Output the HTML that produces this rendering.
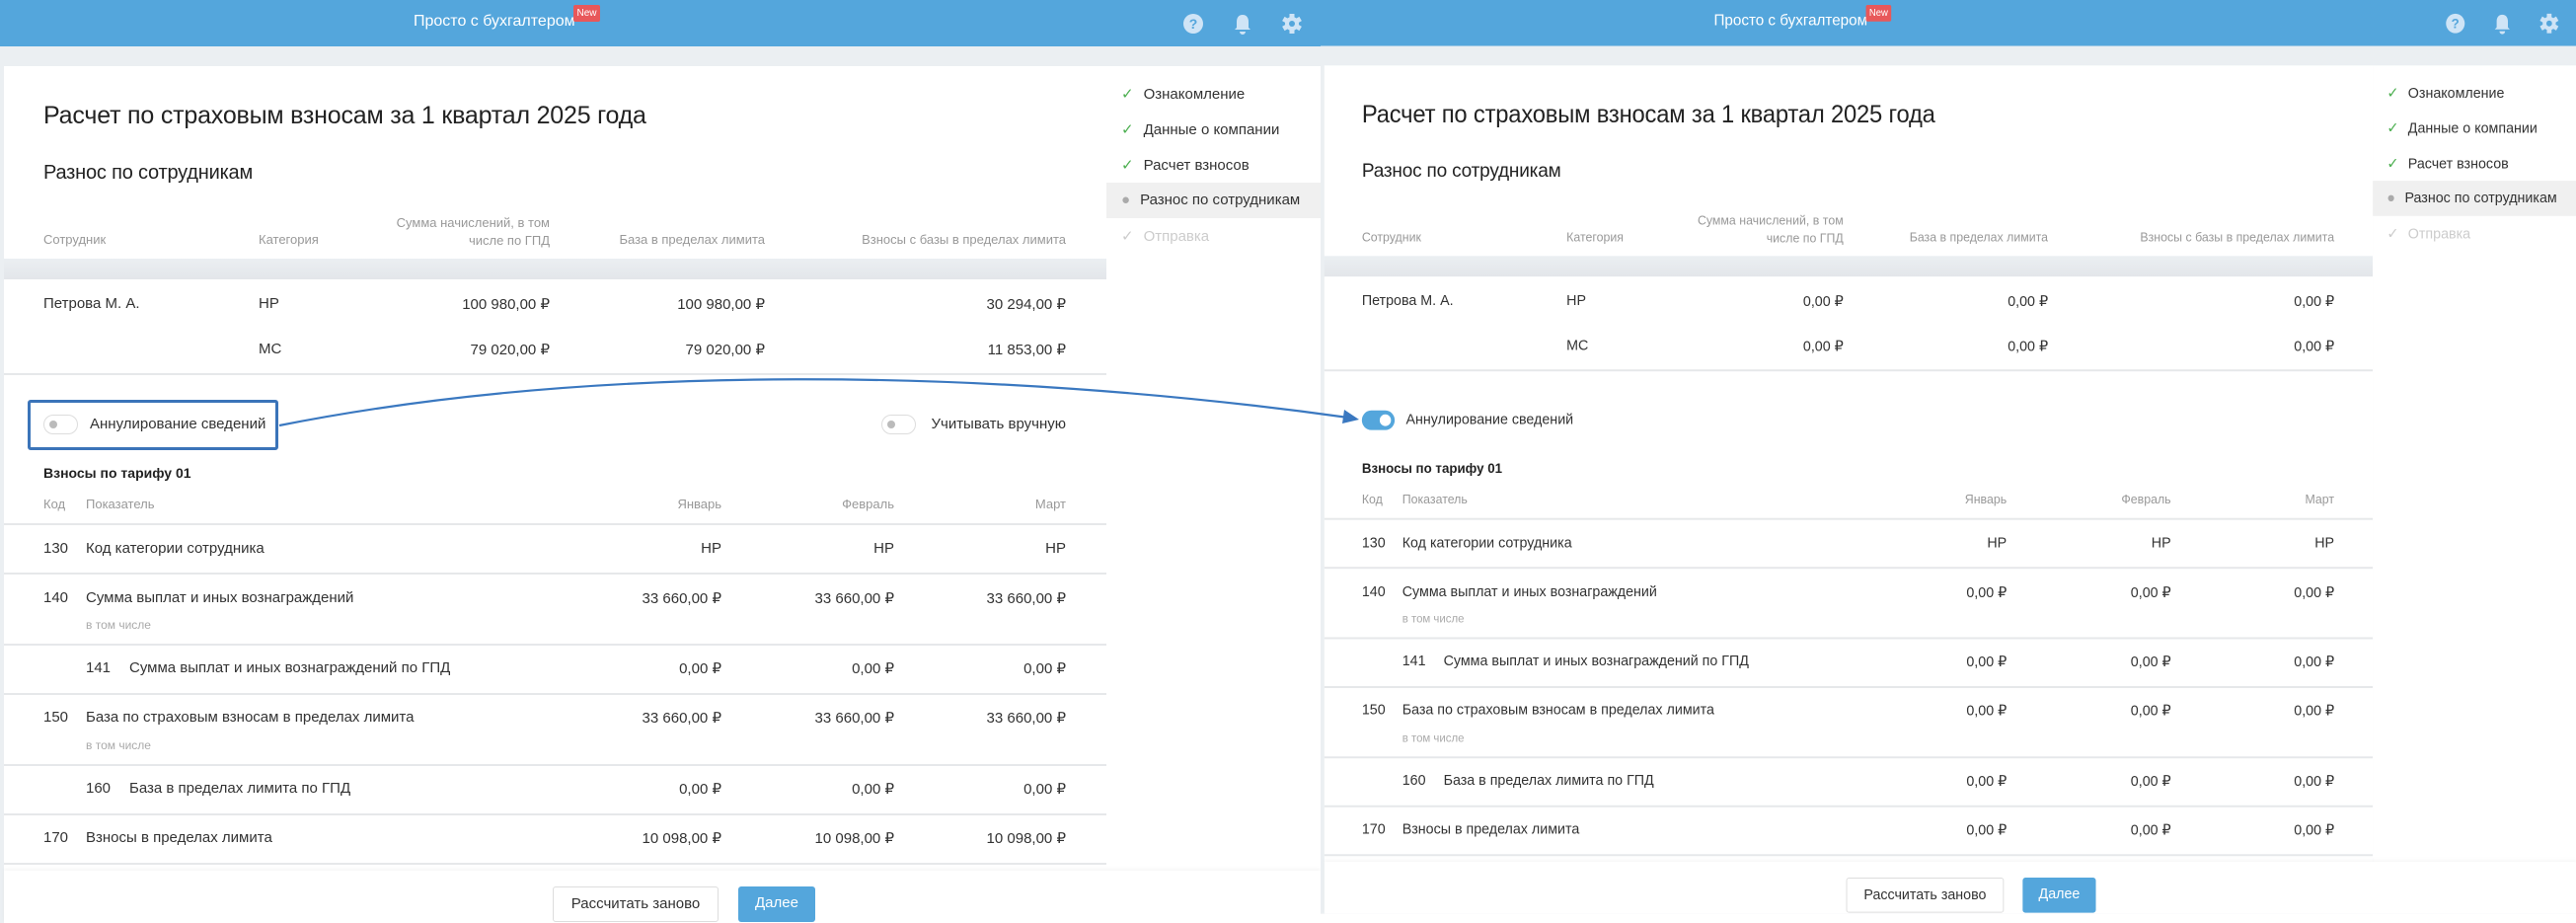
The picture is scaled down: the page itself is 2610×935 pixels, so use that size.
<!DOCTYPE html>
<html><head><meta charset="utf-8"><style>
*{margin:0;padding:0;box-sizing:border-box}
body{width:2610px;height:935px;overflow:hidden;background:#fff;font-family:"Liberation Sans",sans-serif;color:#333;position:relative}
.scr{position:absolute;top:0;width:1338px;height:935px;background:#ebeff2;overflow:hidden}
.scr div,.scr span{position:absolute}
.hdr{left:0;top:0;width:1338px;height:47px;background:#54a6dc}
.ttl{left:419px;top:13px;color:#fff;font-size:16px;white-space:nowrap}
.new{left:581px;top:5px;width:27px;height:17px;background:#e8585a;color:#fff;font-size:10px;border-radius:2px;text-align:center;line-height:17px}
.main{left:4px;top:67px;width:1117px;height:195px;background:#fff}
.band{left:4px;top:262px;width:1117px;height:21px;background:linear-gradient(#ebeff2,#e3e6ea)}
.main2{left:4px;top:283px;width:1117px;height:600px;background:#fff}
.side{left:1121px;top:67px;width:217px;height:816px;background:#fff}
.foot{left:4px;top:882px;width:1334px;height:53px;background:#fff;box-shadow:0 -2px 4px rgba(0,0,0,.04)}
.t{white-space:nowrap}
.h1{left:44px;top:103px;font-size:25px;letter-spacing:-0.2px;color:#222}
.h2{left:44px;top:164px;font-size:20px;letter-spacing:-0.2px;color:#222}
.th{font-size:13px;color:#999}
.r{text-align:right}
.v{font-size:15px;color:#333}
.ln{left:4px;width:1117px;height:2px;background:#e6e8ea}
.tog{width:35px;height:20px;border-radius:10px;background:#fff;border:1px solid #ddd}
.tog i{position:absolute;left:5px;top:5px;width:8px;height:8px;border-radius:50%;background:#bbb}
.sb{left:20px;font-size:15px;color:#333;white-space:nowrap}
.sb b{color:#4caf50;font-weight:normal;margin-right:10px}
.small{font-size:12px;color:#aaa}
.btn{top:898px;height:36px;font-size:15px;line-height:34px;text-align:center;border-radius:3px}
</style></head><body>

<!-- LEFT -->
<div class="scr" style="left:0">
<div class="hdr"></div>
<div class="t ttl">Просто с бухгалтером</div><div class="new">New</div>
<svg style="position:absolute;left:1198px;top:12px" width="124" height="24" viewBox="0 0 124 24"><circle cx="11" cy="12" r="10" fill="#cfe4f6"/><text x="11" y="17" font-size="14" font-weight="bold" text-anchor="middle" fill="#54a6dc" font-family="Liberation Sans">?</text><path d="M61 3c-4 0-6 3-6 7v6l-2 2h16l-2-2v-6c0-4-2-7-6-7z M58 20h6a3 3 0 0 1-6 0z" fill="#cfe4f6"/><g transform="translate(111,12)" fill="#cfe4f6"><circle r="7"/><rect x="-2.5" y="-10" width="5" height="20"/><rect x="-2.5" y="-10" width="5" height="20" transform="rotate(60)"/><rect x="-2.5" y="-10" width="5" height="20" transform="rotate(120)"/><circle r="3" fill="#54a6dc"/></g></svg>
<div class="main"></div><div class="band"></div><div class="main2"></div><div class="side"></div>
<div class="sb" style="left:1136px;top:86px"><b>✓</b>Ознакомление</div>
<div class="sb" style="left:1136px;top:122px"><b>✓</b>Данные о компании</div>
<div class="sb" style="left:1136px;top:158px"><b>✓</b>Расчет взносов</div>
<div style="left:1121px;top:185px;width:217px;height:36px;background:#f0f0f0"></div>
<div class="sb" style="left:1136px;top:194px"><b style="color:#aaa">●</b>Разнос по сотрудникам</div>
<div class="sb" style="left:1136px;top:230px;color:#ccc"><b style="color:#ccc">✓</b>Отправка</div>
<div class="t h1">Расчет по страховым взносам за 1 квартал 2025 года</div>
<div class="t h2">Разнос по сотрудникам</div>
<div class="t th" style="left:44px;top:235px">Сотрудник</div>
<div class="t th" style="left:262px;top:235px">Категория</div>
<div class="t th r" style="left:357px;width:200px;top:217px;line-height:18px">Сумма начислений, в том<br>числе по ГПД</div>
<div class="t th r" style="left:575px;width:200px;top:235px">База в пределах лимита</div>
<div class="t th r" style="left:780px;width:300px;top:235px">Взносы с базы в пределах лимита</div>
<div class="t v" style="left:44px;top:299px">Петрова М. А.</div>
<div class="t v" style="left:262px;top:299px">НР</div>
<div class="t v r" style="left:357px;width:200px;top:299px">100 980,00 ₽</div>
<div class="t v r" style="left:575px;width:200px;top:299px">100 980,00 ₽</div>
<div class="t v r" style="left:880px;width:200px;top:299px">30 294,00 ₽</div>
<div class="t v" style="left:262px;top:345px">МС</div>
<div class="t v r" style="left:357px;width:200px;top:345px">79 020,00 ₽</div>
<div class="t v r" style="left:575px;width:200px;top:345px">79 020,00 ₽</div>
<div class="t v r" style="left:880px;width:200px;top:345px">11 853,00 ₽</div>
<div class="ln" style="top:378px"></div>
<div style="left:28px;top:405px;width:254px;height:51px;border:3px solid #3b74b9;border-radius:3px"></div>
<div class="tog" style="left:44px;top:420px"><i></i></div>
<div class="t v" style="left:91px;top:421px">Аннулирование сведений</div>
<div class="tog" style="left:893px;top:420px"><i></i></div>
<div class="t v r" style="left:880px;width:200px;top:421px">Учитывать вручную</div>
<div class="t" style="left:44px;top:471px;font-size:14px;font-weight:bold;color:#222">Взносы по тарифу 01</div>
<div class="t th" style="left:44px;top:503px">Код</div>
<div class="t th" style="left:87px;top:503px">Показатель</div>
<div class="t th r" style="left:581px;width:150px;top:503px">Январь</div>
<div class="t th r" style="left:756px;width:150px;top:503px">Февраль</div>
<div class="t th r" style="left:930px;width:150px;top:503px">Март</div>
<div class="ln" style="top:530px"></div>
<div class="t v" style="left:44px;top:547px">130</div><div class="t v" style="left:87px;top:547px">Код категории сотрудника</div>
<div class="t v r" style="left:581px;width:150px;top:547px">НР</div><div class="t v r" style="left:756px;width:150px;top:547px">НР</div><div class="t v r" style="left:930px;width:150px;top:547px">НР</div>
<div class="ln" style="top:580px"></div>
<div class="t v" style="left:44px;top:597px">140</div><div class="t v" style="left:87px;top:597px">Сумма выплат и иных вознаграждений</div>
<div class="t small" style="left:87px;top:626px">в том числе</div>
<div class="t v r" style="left:581px;width:150px;top:597px">33 660,00 ₽</div><div class="t v r" style="left:756px;width:150px;top:597px">33 660,00 ₽</div><div class="t v r" style="left:930px;width:150px;top:597px">33 660,00 ₽</div>
<div class="ln" style="top:652px"></div>
<div class="t v" style="left:87px;top:668px">141</div><div class="t v" style="left:131px;top:668px">Сумма выплат и иных вознаграждений по ГПД</div>
<div class="t v r" style="left:581px;width:150px;top:668px">0,00 ₽</div><div class="t v r" style="left:756px;width:150px;top:668px">0,00 ₽</div><div class="t v r" style="left:930px;width:150px;top:668px">0,00 ₽</div>
<div class="ln" style="top:702px"></div>
<div class="t v" style="left:44px;top:718px">150</div><div class="t v" style="left:87px;top:718px">База по страховым взносам в пределах лимита</div>
<div class="t small" style="left:87px;top:748px">в том числе</div>
<div class="t v r" style="left:581px;width:150px;top:718px">33 660,00 ₽</div><div class="t v r" style="left:756px;width:150px;top:718px">33 660,00 ₽</div><div class="t v r" style="left:930px;width:150px;top:718px">33 660,00 ₽</div>
<div class="ln" style="top:774px"></div>
<div class="t v" style="left:87px;top:790px">160</div><div class="t v" style="left:131px;top:790px">База в пределах лимита по ГПД</div>
<div class="t v r" style="left:581px;width:150px;top:790px">0,00 ₽</div><div class="t v r" style="left:756px;width:150px;top:790px">0,00 ₽</div><div class="t v r" style="left:930px;width:150px;top:790px">0,00 ₽</div>
<div class="ln" style="top:824px"></div>
<div class="t v" style="left:44px;top:840px">170</div><div class="t v" style="left:87px;top:840px">Взносы в пределах лимита</div>
<div class="t v r" style="left:581px;width:150px;top:840px">10 098,00 ₽</div><div class="t v r" style="left:756px;width:150px;top:840px">10 098,00 ₽</div><div class="t v r" style="left:930px;width:150px;top:840px">10 098,00 ₽</div>
<div class="ln" style="top:874px"></div>
<div class="foot"></div>
<div class="btn" style="left:560px;width:168px;border:1px solid #ddd;background:#fff;color:#333">Рассчитать заново</div>
<div class="btn" style="left:748px;width:78px;background:#54a6dc;color:#fff">Далее</div>
</div>

<!-- RIGHT -->
<div class="scr" style="left:1338px;transform:scale(0.951,0.99);transform-origin:0 0;width:1338px">
<div class="hdr"></div>
<div class="t ttl">Просто с бухгалтером</div><div class="new">New</div>
<svg style="position:absolute;left:1198px;top:12px" width="124" height="24" viewBox="0 0 124 24"><circle cx="11" cy="12" r="10" fill="#cfe4f6"/><text x="11" y="17" font-size="14" font-weight="bold" text-anchor="middle" fill="#54a6dc" font-family="Liberation Sans">?</text><path d="M61 3c-4 0-6 3-6 7v6l-2 2h16l-2-2v-6c0-4-2-7-6-7z M58 20h6a3 3 0 0 1-6 0z" fill="#cfe4f6"/><g transform="translate(111,12)" fill="#cfe4f6"><circle r="7"/><rect x="-2.5" y="-10" width="5" height="20"/><rect x="-2.5" y="-10" width="5" height="20" transform="rotate(60)"/><rect x="-2.5" y="-10" width="5" height="20" transform="rotate(120)"/><circle r="3" fill="#54a6dc"/></g></svg>
<div class="main"></div><div class="band"></div><div class="main2"></div><div class="side"></div>
<div class="sb" style="left:1136px;top:86px"><b>✓</b>Ознакомление</div>
<div class="sb" style="left:1136px;top:122px"><b>✓</b>Данные о компании</div>
<div class="sb" style="left:1136px;top:158px"><b>✓</b>Расчет взносов</div>
<div style="left:1121px;top:185px;width:217px;height:36px;background:#f0f0f0"></div>
<div class="sb" style="left:1136px;top:194px"><b style="color:#aaa">●</b>Разнос по сотрудникам</div>
<div class="sb" style="left:1136px;top:230px;color:#ccc"><b style="color:#ccc">✓</b>Отправка</div>
<div class="t h1">Расчет по страховым взносам за 1 квартал 2025 года</div>
<div class="t h2">Разнос по сотрудникам</div>
<div class="t th" style="left:44px;top:235px">Сотрудник</div>
<div class="t th" style="left:262px;top:235px">Категория</div>
<div class="t th r" style="left:357px;width:200px;top:217px;line-height:18px">Сумма начислений, в том<br>числе по ГПД</div>
<div class="t th r" style="left:575px;width:200px;top:235px">База в пределах лимита</div>
<div class="t th r" style="left:780px;width:300px;top:235px">Взносы с базы в пределах лимита</div>
<div class="t v" style="left:44px;top:299px">Петрова М. А.</div>
<div class="t v" style="left:262px;top:299px">НР</div>
<div class="t v r" style="left:357px;width:200px;top:299px">0,00 ₽</div>
<div class="t v r" style="left:575px;width:200px;top:299px">0,00 ₽</div>
<div class="t v r" style="left:880px;width:200px;top:299px">0,00 ₽</div>
<div class="t v" style="left:262px;top:345px">МС</div>
<div class="t v r" style="left:357px;width:200px;top:345px">0,00 ₽</div>
<div class="t v r" style="left:575px;width:200px;top:345px">0,00 ₽</div>
<div class="t v r" style="left:880px;width:200px;top:345px">0,00 ₽</div>
<div class="ln" style="top:378px"></div>
<div style="left:44px;top:420px;width:35px;height:20px;border-radius:10px;background:#54a6dc"><i style="position:absolute;right:4px;top:4px;width:12px;height:12px;border-radius:50%;background:#fff"></i></div>
<div class="t v" style="left:91px;top:421px">Аннулирование сведений</div>
<div class="t" style="left:44px;top:471px;font-size:14px;font-weight:bold;color:#222">Взносы по тарифу 01</div>
<div class="t th" style="left:44px;top:503px">Код</div>
<div class="t th" style="left:87px;top:503px">Показатель</div>
<div class="t th r" style="left:581px;width:150px;top:503px">Январь</div>
<div class="t th r" style="left:756px;width:150px;top:503px">Февраль</div>
<div class="t th r" style="left:930px;width:150px;top:503px">Март</div>
<div class="ln" style="top:530px"></div>
<div class="t v" style="left:44px;top:547px">130</div><div class="t v" style="left:87px;top:547px">Код категории сотрудника</div>
<div class="t v r" style="left:581px;width:150px;top:547px">НР</div><div class="t v r" style="left:756px;width:150px;top:547px">НР</div><div class="t v r" style="left:930px;width:150px;top:547px">НР</div>
<div class="ln" style="top:580px"></div>
<div class="t v" style="left:44px;top:597px">140</div><div class="t v" style="left:87px;top:597px">Сумма выплат и иных вознаграждений</div>
<div class="t small" style="left:87px;top:626px">в том числе</div>
<div class="t v r" style="left:581px;width:150px;top:597px">0,00 ₽</div><div class="t v r" style="left:756px;width:150px;top:597px">0,00 ₽</div><div class="t v r" style="left:930px;width:150px;top:597px">0,00 ₽</div>
<div class="ln" style="top:652px"></div>
<div class="t v" style="left:87px;top:668px">141</div><div class="t v" style="left:131px;top:668px">Сумма выплат и иных вознаграждений по ГПД</div>
<div class="t v r" style="left:581px;width:150px;top:668px">0,00 ₽</div><div class="t v r" style="left:756px;width:150px;top:668px">0,00 ₽</div><div class="t v r" style="left:930px;width:150px;top:668px">0,00 ₽</div>
<div class="ln" style="top:702px"></div>
<div class="t v" style="left:44px;top:718px">150</div><div class="t v" style="left:87px;top:718px">База по страховым взносам в пределах лимита</div>
<div class="t small" style="left:87px;top:748px">в том числе</div>
<div class="t v r" style="left:581px;width:150px;top:718px">0,00 ₽</div><div class="t v r" style="left:756px;width:150px;top:718px">0,00 ₽</div><div class="t v r" style="left:930px;width:150px;top:718px">0,00 ₽</div>
<div class="ln" style="top:774px"></div>
<div class="t v" style="left:87px;top:790px">160</div><div class="t v" style="left:131px;top:790px">База в пределах лимита по ГПД</div>
<div class="t v r" style="left:581px;width:150px;top:790px">0,00 ₽</div><div class="t v r" style="left:756px;width:150px;top:790px">0,00 ₽</div><div class="t v r" style="left:930px;width:150px;top:790px">0,00 ₽</div>
<div class="ln" style="top:824px"></div>
<div class="t v" style="left:44px;top:840px">170</div><div class="t v" style="left:87px;top:840px">Взносы в пределах лимита</div>
<div class="t v r" style="left:581px;width:150px;top:840px">0,00 ₽</div><div class="t v r" style="left:756px;width:150px;top:840px">0,00 ₽</div><div class="t v r" style="left:930px;width:150px;top:840px">0,00 ₽</div>
<div class="ln" style="top:874px"></div>
<div class="foot"></div>
<div class="btn" style="left:560px;width:168px;border:1px solid #ddd;background:#fff;color:#333">Рассчитать заново</div>
<div class="btn" style="left:748px;width:78px;background:#54a6dc;color:#fff">Далее</div>
</div>

<!-- ARROW -->
<svg style="position:absolute;left:0;top:0" width="2610" height="935">
<path d="M283 431 C 600 368, 1000 372, 1366 423" fill="none" stroke="#3a78c0" stroke-width="2.2"/>
<path d="M1377 425 L1362 415 L1360 429 Z" fill="#3a78c0"/>
</svg>
</body></html>
